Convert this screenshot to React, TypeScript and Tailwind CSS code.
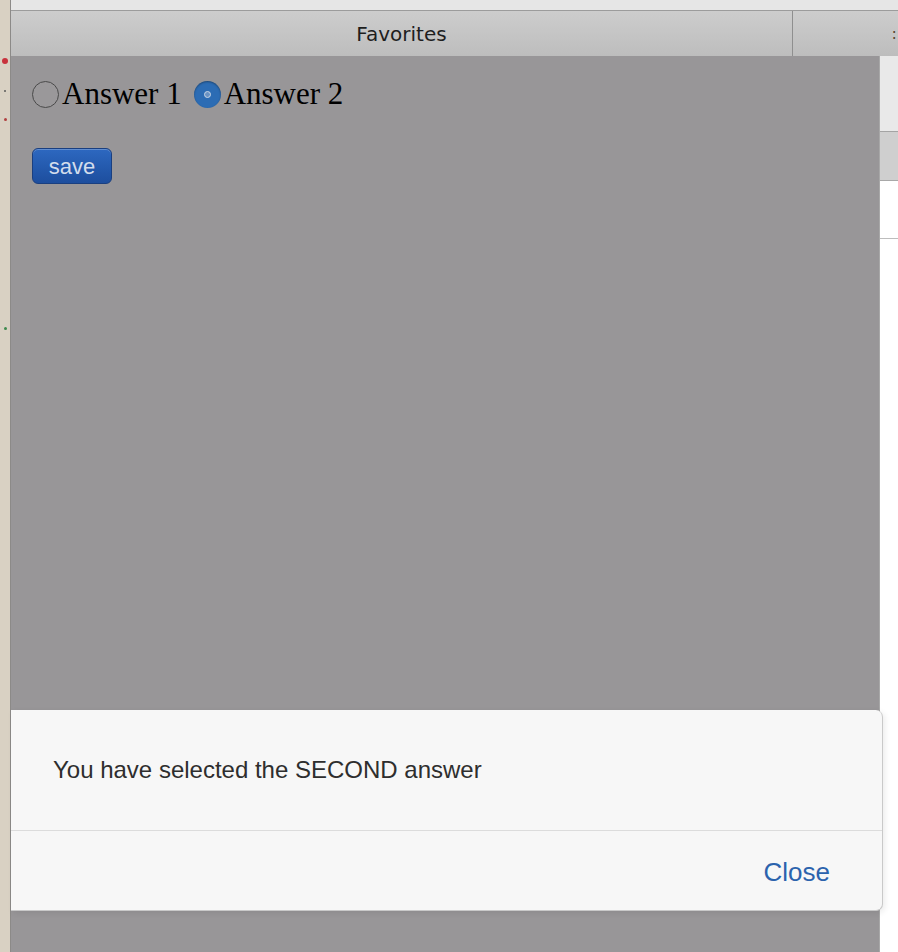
import { useState } from 'react';

const answers = ['Answer 1', 'Answer 2'];

const Radio = ({ checked, onClick }: { checked: boolean; onClick: () => void }) =>
  checked ? (
    <button
      type="button"
      onClick={onClick}
      className="flex h-[27px] w-[27px] shrink-0 items-center justify-center rounded-full bg-[#2c6cb4] shadow-[inset_0_1px_2px_rgba(0,0,0,0.35)]"
    >
      <span className="h-[7px] w-[7px] rounded-full border border-[#c9d6e6] bg-[#6a93c4]" />
    </button>
  ) : (
    <button
      type="button"
      onClick={onClick}
      className="h-[27px] w-[27px] shrink-0 rounded-full border-[1.5px] border-[#4a4a4a] bg-[#9a989a]"
    />
  );

const App = () => {
  const [selected, setSelected] = useState(1);

  return (
    <div className="relative flex h-[952px] w-[898px] overflow-hidden bg-white">
      {/* desktop edge */}
      <div className="flex w-[10px] shrink-0 flex-col items-center gap-[26px] bg-[#d9d1c3] pt-[58px]">
        <span className="h-[6px] w-[6px] rounded-full bg-[#c8323c]" />
        <span className="h-[2px] w-[2px] rounded-full bg-[#5a5a5a]" />
        <span className="h-[3px] w-[3px] rounded-full bg-[#b04040]" />
        <span className="mt-[180px] h-[3px] w-[3px] rounded-full bg-[#3e8a4e]" />
      </div>
      <div className="w-px shrink-0 bg-[#8c8a88]" />

      <div className="flex flex-1 flex-col">
        <div className="h-[11px] shrink-0 border-b border-[#9c9c9c] bg-[#e6e6e6]" />

        {/* tabs */}
        <div className="flex h-[45px] shrink-0 bg-gradient-to-b from-[#cdcdcd] to-[#bdbdbd] text-[#1e1e1e]">
          <div className="flex w-[782px] items-center justify-center border-r border-[#8f8f8f] font-['DejaVu_Sans',sans-serif] text-[20px]">
            Favorites
          </div>
          <div className="flex flex-1 items-center justify-end pr-[1px] font-['DejaVu_Sans',sans-serif] text-[16px] text-[#5a4a30]">
            :
          </div>
        </div>

        <div className="flex flex-1">
          {/* backdrop with the page */}
          <div className="flex w-[868px] flex-col bg-[#989698] pl-[21px] pt-[20px]">
            <div className="flex items-center font-['Liberation_Serif',serif] text-[31px] leading-[36px] text-black">
              {answers.map((label, i) => (
                <label key={label} className="mr-[12px] flex items-center">
                  <Radio checked={selected === i} onClick={() => setSelected(i)} />
                  <span className="ml-[3px]">{label}</span>
                </label>
              ))}
            </div>
            <button
              type="button"
              className="mt-[36px] h-[36px] w-[80px] rounded-[6px] border border-[#1a3f80] bg-gradient-to-b from-[#2d68c0] to-[#1d4e9e] pt-[2px] font-['Liberation_Sans',sans-serif] text-[22px] leading-none text-[#d3ddec] shadow-[inset_0_1px_0_rgba(255,255,255,0.25)]"
            >
              save
            </button>
          </div>

          {/* page behind, right edge */}
          <div className="flex flex-1 flex-col border-l border-[#a8a8a8]">
            <div className="h-[76px] border-b border-[#a4a4a4] bg-[#e9e9e9]" />
            <div className="h-[49px] border-b border-[#a8a8a8] bg-[#cfcfcf]" />
            <div className="h-[58px] border-b border-[#bdbdbd] bg-white" />
            <div className="flex-1 bg-white" />
          </div>
        </div>
      </div>

      {/* alert dialog */}
      <div className="absolute left-[11px] top-[710px] flex h-[201px] w-[872px] flex-col rounded-r-[7px] border-r border-b border-[#c9c9c9] bg-[#f7f7f7] font-['Liberation_Sans',sans-serif] shadow-[2px_2px_6px_rgba(0,0,0,0.08)]">
        <div className="flex h-[121px] items-center border-b border-[#dcdcdc] pl-[42px] text-[24px] text-[#2e2e2e]">
          You have selected the {selected === 1 ? 'SECOND' : 'FIRST'} answer
        </div>
        <div className="flex flex-1 items-center justify-end pr-[52px] pt-[3px]">
          <button type="button" className="text-[26px] text-[#2b63ad]">
            Close
          </button>
        </div>
      </div>
    </div>
  );
};

export default App;
